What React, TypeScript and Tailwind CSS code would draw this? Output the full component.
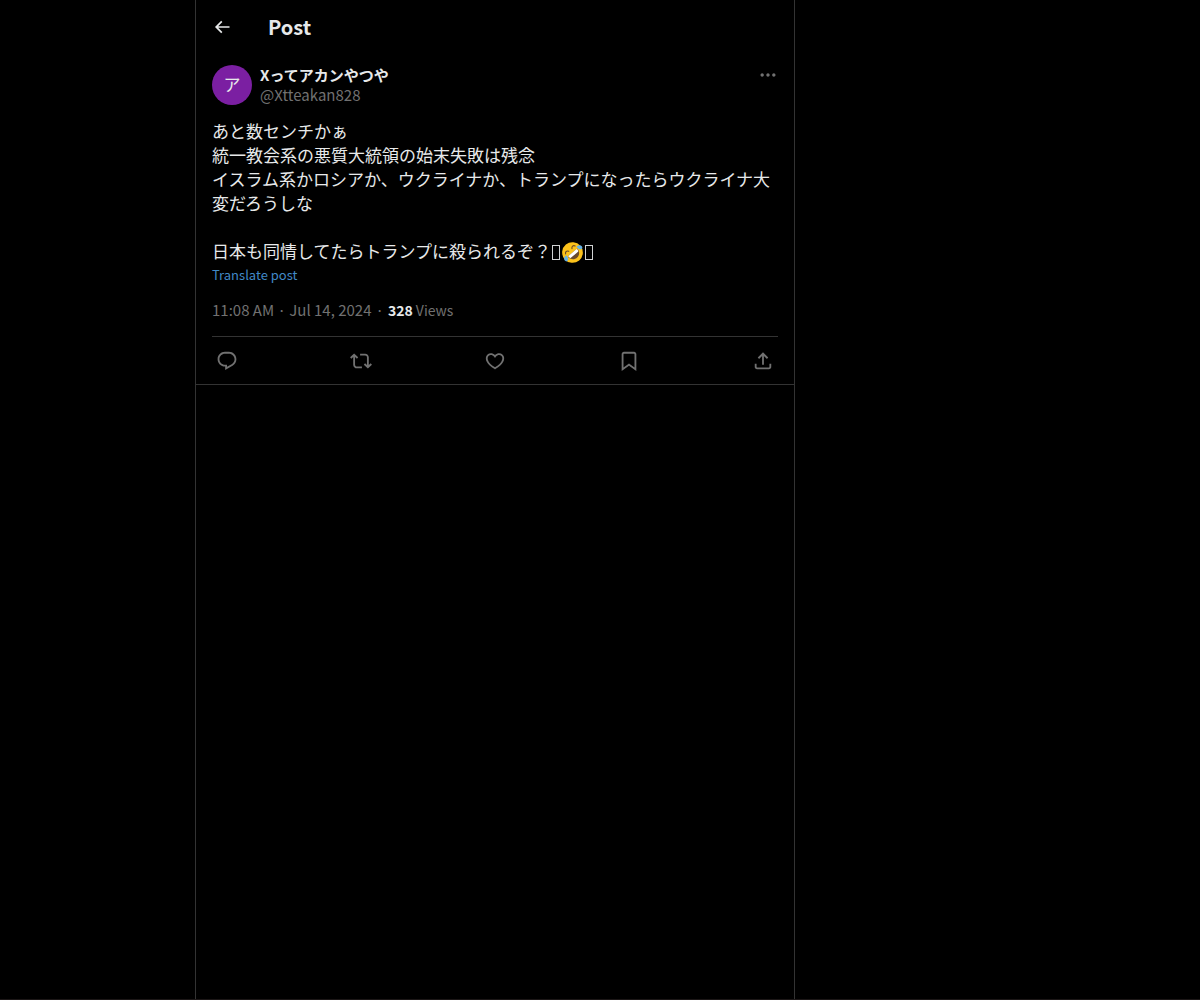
type IconProps = { d: string; className: string };

const icons = {
  back: "M7.414 13l5.043 5.04-1.414 1.42L3.586 12l7.457-7.46 1.414 1.42L7.414 11H21v2H7.414z",
  more: "M3 12c0-1.1.9-2 2-2s2 .9 2 2-.9 2-2 2-2-.9-2-2zm9 2c1.1 0 2-.9 2-2s-.9-2-2-2-2 .9-2 2 .9 2 2 2zm7 0c1.1 0 2-.9 2-2s-.9-2-2-2-2 .9-2 2 .9 2 2 2z",
};

const actions = [
  {
    label: "Reply",
    d: "M1.751 10c0-4.42 3.584-8 8.005-8h4.366c4.49 0 8.129 3.64 8.129 8.13 0 2.96-1.607 5.68-4.196 7.11l-8.054 4.46v-3.69h-.067c-4.49.1-8.183-3.51-8.183-8.01zm8.005-6c-3.317 0-6.005 2.69-6.005 6 0 3.37 2.77 6.08 6.138 6.01l.351-.01h1.761v2.3l5.087-2.81c1.951-1.08 3.163-3.13 3.163-5.36 0-3.39-2.744-6.13-6.129-6.13H9.756z",
  },
  {
    label: "Repost",
    d: "M4.5 3.88l4.432 4.14-1.364 1.46L5.5 7.55V16c0 1.1.896 2 2 2H13v2H7.5c-2.209 0-4-1.79-4-4V7.55L1.432 9.48.068 8.02 4.5 3.88zM16.5 6H11V4h5.5c2.209 0 4 1.79 4 4v8.45l2.068-1.93 1.364 1.46-4.432 4.14-4.432-4.14 1.364-1.46 2.068 1.93V8c0-1.1-.896-2-2-2z",
  },
  {
    label: "Like",
    d: "M16.697 5.5c-1.222-.06-2.679.51-3.89 2.16l-.805 1.09-.806-1.09C9.984 6.01 8.526 5.44 7.304 5.5c-1.243.07-2.349.78-2.91 1.91-.552 1.12-.633 2.78.479 4.82 1.074 1.97 3.257 4.27 7.129 6.61 3.87-2.34 6.052-4.64 7.126-6.61 1.111-2.04 1.03-3.7.477-4.82-.561-1.13-1.666-1.84-2.908-1.91zm4.187 7.69c-1.351 2.48-4.001 5.12-8.379 7.67l-.503.3-.504-.3c-4.379-2.55-7.029-5.19-8.382-7.67-1.36-2.5-1.41-4.86-.514-6.67.887-1.79 2.647-2.91 4.601-3.01 1.651-.09 3.368.56 4.798 2.01 1.429-1.45 3.146-2.1 4.796-2.01 1.954.1 3.714 1.22 4.601 3.01.896 1.81.846 4.17-.514 6.67z",
  },
  {
    label: "Bookmark",
    d: "M4 4.5C4 3.12 5.119 2 6.5 2h11C18.881 2 20 3.12 20 4.5v18.44l-8-5.71-8 5.71V4.5zM6.5 4c-.276 0-.5.22-.5.5v14.56l6-4.29 6 4.29V4.5c0-.28-.224-.5-.5-.5h-11z",
  },
  {
    label: "Share post",
    d: "M12 2.59l5.7 5.7-1.41 1.42L13 6.41V16h-2V6.41l-3.3 3.3-1.41-1.42L12 2.59zM21 15l-.02 3.51c0 1.38-1.12 2.49-2.5 2.49H5.5C4.11 21 3 19.88 3 18.5V15h2v3.5c0 .28.22.5.5.5h12.98c.28 0 .5-.22.5-.5L19 15h2z",
  },
];

function Icon({ d, className }: IconProps) {
  return (
    <svg viewBox="0 0 24 24" fill="currentColor" aria-hidden="true" className={className}>
      <path d={d} />
    </svg>
  );
}

// Outline box drawn for a character with no glyph
function MissingGlyph() {
  return <span className="mx-px inline-block h-[15px] w-2 border border-[#d0d2d3] align-[-2px]" />;
}

function RoflEmoji() {
  return (
    <svg viewBox="0 0 24 24" role="img" aria-label="🤣" className="inline-block size-[23px] align-[-6px]">
      <g transform="rotate(-40 12 12)">
        <circle cx="12" cy="12" r="10.8" fill="#fcc21b" />
        <path d="M5.5 12h13c0 4.4-2.8 7.2-6.5 7.2s-6.5-2.8-6.5-7.2z" fill="#6b4a2a" />
        <path d="M6 12h12c0 2-.5 3.2-1.1 3.2H7.1C6.5 15.2 6 14 6 12z" fill="#fff" />
        <path
          d="M5.5 8.5c1-2 3.2-2 4.3 0M14.2 8.5c1.1-2 3.3-2 4.3 0"
          fill="none"
          stroke="#6b4a2a"
          strokeWidth="1.2"
          strokeLinecap="round"
        />
        <path d="M5 10c-2.6-.1-4.6 1.2-4.6 3.3 0 1.7 1.4 2.5 2.7 1.9C4.7 14.5 4.9 12.3 5 10z" fill="#65b1e4" />
        <path d="M19 10c2.6-.1 4.6 1.2 4.6 3.3 0 1.7-1.4 2.5-2.7 1.9-1.6-.7-1.8-2.9-1.9-5.2z" fill="#65b1e4" />
      </g>
    </svg>
  );
}

export default function App() {
  return (
    <div className="grid min-h-screen grid-cols-[195px_minmax(0,600px)_1fr] border-b border-[#1c1717] bg-black font-['Noto_Sans_CJK_JP','Noto_Sans',sans-serif] text-[#e7e9ea]">
      <main className="col-start-2 border-x border-[#333333]">
        {/* Header */}
        <header className="flex h-[53px] items-center gap-9 px-4">
          <button type="button" aria-label="Back">
            <Icon d={icons.back} className="size-5" />
          </button>
          <h1 className="text-xl font-bold">Post</h1>
        </header>

        {/* Post */}
        <article className="border-b border-[#333333] px-4 pt-3">
          <div className="flex items-start gap-2">
            <div className="flex size-10 items-center justify-center rounded-full bg-[#7b1fa2] pb-0.5 text-[17px] leading-6">
              ア
            </div>
            <div className="flex-1 text-[15px] leading-5">
              <div className="font-bold">Xってアカンやつや</div>
              <div className="text-[#717171]">@Xtteakan828</div>
            </div>
            <button type="button" aria-label="More" className="text-[#717171]">
              <Icon d={icons.more} className="size-5" />
            </button>
          </div>

          <div className="mt-[14px] whitespace-pre-wrap text-[17px] leading-6">
            {"あと数センチかぁ\n統一教会系の悪質大統領の始末失敗は残念\nイスラム系かロシアか、ウクライナか、トランプになったらウクライナ大変だろうしな\n\n日本も同情してたらトランプに殺られるぞ？"}
            <MissingGlyph />
            <RoflEmoji />
            <MissingGlyph />
          </div>
          <button type="button" className="mt-px block text-[13px] leading-5 text-[#4189c7]">
            Translate post
          </button>

          <div className="mt-[15px] mb-4 text-[15px] leading-5 text-[#717171]">
            <a href="#post">11:08 AM · Jul 14, 2024</a>
            <span className="mx-1">·</span>
            <span className="text-sm leading-5">
              <span className="font-bold text-[#e7e9ea]">328</span> Views
            </span>
          </div>

          <div className="flex h-12 items-center justify-between border-t border-[#333333] px-1 text-[#717171]">
            {actions.map((action) => (
              <button key={action.label} type="button" aria-label={action.label}>
                <Icon d={action.d} className="size-[22px]" />
              </button>
            ))}
          </div>
        </article>
      </main>
    </div>
  );
}
